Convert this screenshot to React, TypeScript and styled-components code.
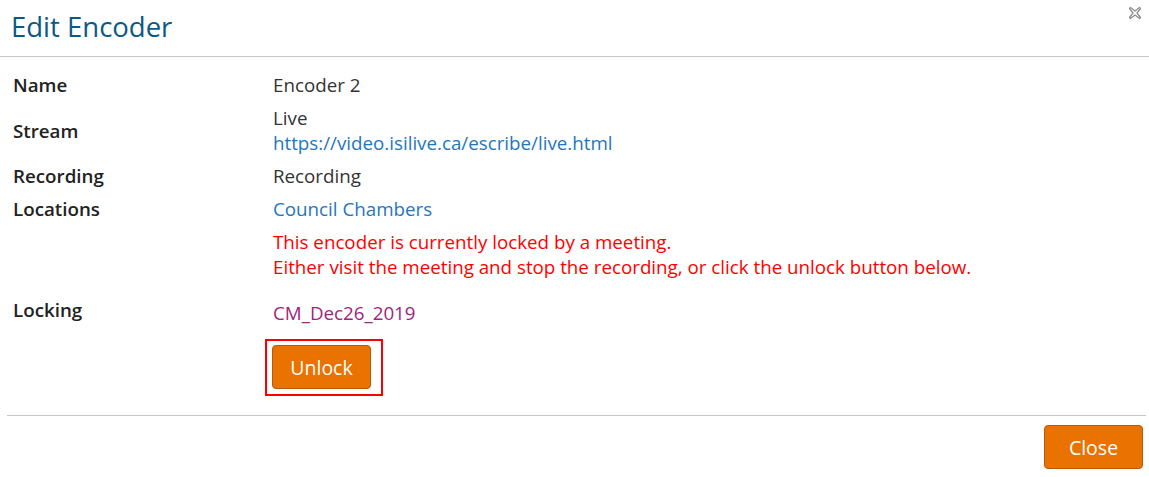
import React from "react";
import styled, { createGlobalStyle } from "styled-components";

const GlobalStyle = createGlobalStyle`
  html, body {
    margin: 0;
    padding: 0;
    background: #ffffff;
  }
  body {
    font-family: "Open Sans", "Noto Sans", sans-serif;
    color: #333333;
  }
`;

const Dialog = styled.div`
  width: 1149px;
  height: 477px;
  background: #ffffff;
  display: flex;
  flex-direction: column;
  position: relative;
`;

const Header = styled.div`
  display: flex;
  align-items: center;
  height: 57px;
  padding: 0 11px;
  border-bottom: 1px solid #c8c8c8;
  box-sizing: border-box;
`;

const Title = styled.h1`
  margin: 0;
  font-size: 27.5px;
  font-weight: 400;
  color: #0b5a84;
  line-height: 1;
  padding-bottom: 2px;
`;

const CloseIcon = styled.button`
  position: absolute;
  top: 5px;
  right: 7px;
  width: 15px;
  height: 15px;
  border: 0;
  padding: 0;
  background: transparent;
  cursor: pointer;
  display: flex;
  align-items: center;
  justify-content: center;
`;

const Body = styled.div`
  display: grid;
  grid-template-columns: 260px 1fr;
  padding: 11px 0 19px 13px;
  font-size: 18.75px;
  line-height: 25px;
`;

const Label = styled.div<{ $align?: "start" | "center"; $shift?: number }>`
  color: #222222;
  font-weight: 600;
  align-self: ${(p) => (p.$align === "center" ? "center" : "start")};
  padding: 4px 0;
  margin-top: ${(p) => (p.$shift ? `${p.$shift}px` : "0")};
`;

const Value = styled.div<{ $pad?: string }>`
  color: #333333;
  padding: ${(p) => p.$pad ?? "4px 0"};
  display: flex;
  flex-direction: column;
  align-items: flex-start;
`;

const Link = styled.a<{ $tone?: "blue" | "plum" }>`
  color: ${(p) => (p.$tone === "plum" ? "#a0257c" : "#1f76bd")};
  text-decoration: none;
`;

const Warning = styled.div`
  color: #ff0000;
`;

const Highlight = styled.div`
  border: 2px solid #ff0000;
  padding: 4px 10px 5px 5px;
  margin-left: -8px;
  display: inline-flex;
`;

const OrangeButton = styled.button`
  font-family: "Open Sans", "Noto Sans", sans-serif;
  font-size: 19.5px;
  color: #ffffff;
  background: #ea7200;
  border: 1px solid #b85a06;
  border-radius: 4px;
  width: 99px;
  height: 44px;
  padding: 0;
  cursor: pointer;
`;

const Footer = styled.div`
  margin: 0 3px 0 7px;
  border-top: 1px solid #c8c8c8;
  display: flex;
  justify-content: flex-end;
  padding: 9px 3px 0 0;
`;

const XGlyph = () => (
  <svg width="14" height="14" viewBox="0 0 14 14" fill="none">
    <path
      d="M2.5 1.5 L7 5 L11.5 1.5 L12.5 2.5 L9 7 L12.5 11.5 L11.5 12.5 L7 9 L2.5 12.5 L1.5 11.5 L5 7 L1.5 2.5 Z"
      stroke="#8f8f8f"
      strokeWidth="1.3"
      strokeLinejoin="round"
    />
  </svg>
);

export default function App() {
  return (
    <>
      <GlobalStyle />
      <Dialog>
        <Header>
          <Title>Edit Encoder</Title>
        </Header>
        <CloseIcon aria-label="Close">
          <XGlyph />
        </CloseIcon>
        <Body>
          <Label>Name</Label>
          <Value>Encoder 2</Value>

          <Label $align="center">Stream</Label>
          <Value>
            <span>Live</span>
            <Link href="#">https://video.isilive.ca/escribe/live.html</Link>
          </Value>

          <Label>Recording</Label>
          <Value>Recording</Value>

          <Label>Locations</Label>
          <Value>
            <Link href="#">Council Chambers</Link>
          </Value>

          <div />
          <Value $pad="4px 0 17px">
            <Warning>This encoder is currently locked by a meeting.</Warning>
            <Warning>
              Either visit the meeting and stop the recording, or click the unlock button below.
            </Warning>
          </Value>

          <Label $shift={-3}>Locking</Label>
          <Value>
            <Link href="#" $tone="plum">CM_Dec26_2019</Link>
          </Value>

          <div />
          <Value $pad="10px 0 0">
            <Highlight>
              <OrangeButton>Unlock</OrangeButton>
            </Highlight>
          </Value>
        </Body>
        <Footer>
          <OrangeButton>Close</OrangeButton>
        </Footer>
      </Dialog>
    </>
  );
}
